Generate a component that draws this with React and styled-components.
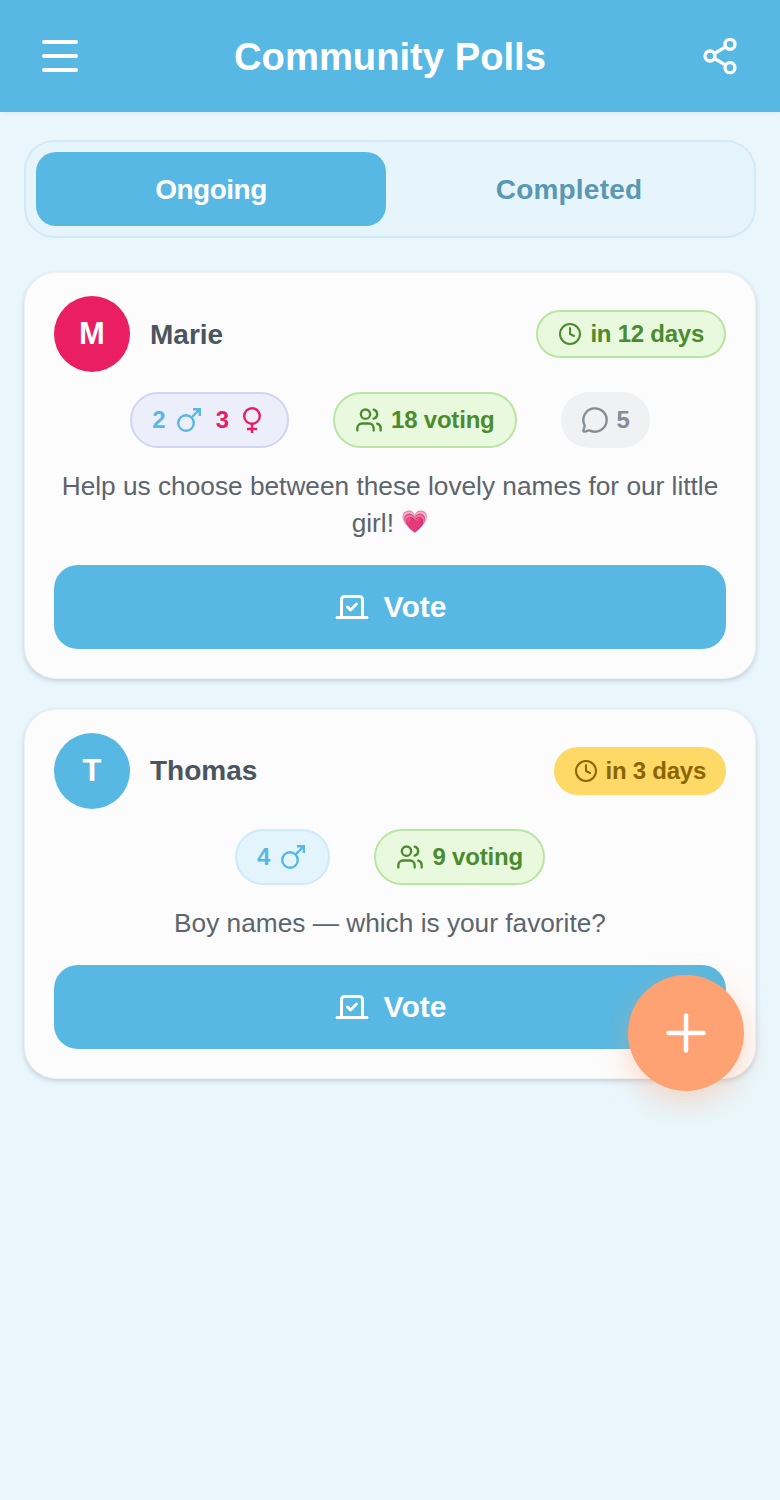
import styled, { createGlobalStyle } from "styled-components";
import { Clock, MessageCircle, Menu, Plus, Share2, Users, Vote } from "lucide-react";

const GlobalStyle = createGlobalStyle`
  html, body {
    margin: 0;
    padding: 0;
    background: #e9f6fc;
  }
  * {
    box-sizing: border-box;
  }
`;

const Page = styled.div`
  position: relative;
  width: 780px;
  height: 1500px;
  overflow: hidden;
  background: #e9f6fc;
  font-family: "Liberation Sans", Arial, sans-serif;
`;

const Header = styled.header`
  height: 112px;
  padding: 0 40px;
  display: grid;
  grid-template-columns: 1fr auto 1fr;
  align-items: center;
  background: #56b8e3;
  color: #fff;
  box-shadow: 0 2px 6px rgba(0, 0, 0, 0.05);
`;

const IconButton = styled.div`
  display: flex;
  justify-content: ${(p) => (p.$end ? "flex-end" : "flex-start")};
  margin-left: ${(p) => (p.$end ? 0 : -4)}px;
`;

const Title = styled.h1`
  margin: 2px 0 0;
  font-size: 38.2px;
  font-weight: 700;
`;

const Content = styled.main`
  padding: 28px 24px;
`;

const Tabs = styled.div`
  display: flex;
  gap: 8px;
  padding: 10px;
  margin-bottom: 34px;
  border: 2px solid #d2eaf7;
  border-radius: 30px;
  background: #e6f4fb;
`;

const Tab = styled.div`
  flex: 1;
  height: 74px;
  padding-top: 1px;
  display: flex;
  align-items: center;
  justify-content: center;
  border-radius: 20px;
  font-size: 28px;
  font-weight: 700;
  letter-spacing: ${(p) => (p.$active ? "-0.5px" : "0.2px")};
  background: ${(p) => (p.$active ? "#56b8e3" : "transparent")};
  color: ${(p) => (p.$active ? "#fff" : "#5a97b2")};
`;

const Card = styled.article`
  padding: 23px 29px 29px;
  margin-bottom: 30px;
  background: #fcfcfc;
  border: 1px solid #eef1f3;
  border-radius: 32px;
  box-shadow: 0 2px 5px rgba(40, 60, 70, 0.2);
`;

const CardTop = styled.div`
  display: flex;
  align-items: center;
  justify-content: space-between;
`;

const Author = styled.div`
  display: flex;
  align-items: center;
  gap: 20px;
`;

const Avatar = styled.div`
  width: 76px;
  height: 76px;
  display: flex;
  align-items: center;
  justify-content: center;
  border-radius: 50%;
  background: ${(p) => p.$color};
  color: #fff;
  font-size: 31px;
  font-weight: 700;
`;

const Name = styled.span`
  padding-top: 1px;
  font-size: 28px;
  font-weight: 700;
  color: #4a5560;
`;

const Deadline = styled.div`
  height: 48px;
  padding: 0 20px;
  display: flex;
  align-items: center;
  gap: 8px;
  border-radius: 24px;
  border: ${(p) => (p.$border ? `2px solid ${p.$border}` : "none")};
  background: ${(p) => p.$bg};
  color: ${(p) => p.$color};
  font-size: 24px;
  font-weight: 700;
  letter-spacing: -0.25px;
`;

const Stats = styled.div`
  margin-top: 20px;
  display: flex;
  justify-content: center;
  gap: 44px;
`;

const Pill = styled.div`
  height: 56px;
  padding: 0 20px;
  display: flex;
  align-items: center;
  gap: 8px;
  border-radius: 28px;
  border: ${(p) => (p.$border ? `2px solid ${p.$border}` : "none")};
  background: ${(p) => p.$bg};
  color: ${(p) => p.$color};
  font-size: 24px;
  font-weight: 700;
  letter-spacing: -0.2px;
`;

const GenderPill = styled(Pill)`
  gap: 15px;
  padding-right: 23px;
  letter-spacing: 0;
`;

const Count = styled.span`
  display: flex;
  align-items: center;
  gap: 11px;
  color: ${(p) => p.$color};
`;

const Description = styled.p`
  margin: 20px 0 23.5px;
  font-size: 26.25px;
  line-height: 36.5px;
  text-align: center;
  color: #5c646e;
`;

const Emoji = styled.span`
  font-size: 22px;
  line-height: 1;
  vertical-align: 3px;
`;

const VoteButton = styled.div`
  height: 84px;
  display: flex;
  align-items: center;
  justify-content: center;
  gap: 14px;
  border-radius: 24px;
  background: #56b8e3;
  color: #fff;
  font-size: 30px;
  font-weight: 700;
`;

const Fab = styled.div`
  position: absolute;
  left: 628px;
  top: 975px;
  width: 116px;
  height: 116px;
  display: flex;
  align-items: center;
  justify-content: center;
  border-radius: 50%;
  background: #ffa273;
  color: #fff;
  box-shadow: 0 10px 30px rgba(255, 162, 115, 0.4);
`;

const BLUE = "#56b8e3";
const PINK = "#e91e63";
const GREEN = { $bg: "#e9f9dd", $border: "#b9e5a2", $color: "#4b8b2f" };
const YELLOW = { $bg: "#ffd966", $color: "#8a6500" };

function MaleIcon() {
  return (
    <svg width="24" height="24" viewBox="0 0 24 24" fill="none" stroke="currentColor" strokeWidth="2.4">
      <circle cx="9" cy="15" r="7.8" />
      <path d="M15 9l8-8M16 1.2h6.8v6.8" />
    </svg>
  );
}

function FemaleIcon() {
  return (
    <svg width="24" height="26" viewBox="0 0 24 26" fill="none" stroke="currentColor" strokeWidth="2.4">
      <circle cx="12" cy="9" r="7.8" />
      <path d="M12 17v9M7 22h10" />
    </svg>
  );
}

function PollCard({ initial, color, name, deadline, tone, counts, voting, comments, text, emoji }) {
  return (
    <Card>
      <CardTop>
        <Author>
          <Avatar $color={color}>{initial}</Avatar>
          <Name>{name}</Name>
        </Author>
        <Deadline {...tone}>
          <Clock size={24} strokeWidth={2} />
          {deadline}
        </Deadline>
      </CardTop>
      <Stats>
        <GenderPill
          $bg={counts.female ? "#eceffa" : "#e3f4fd"}
          $border={counts.female ? "#d2d5ef" : "#cfeafa"}
          $color={BLUE}
        >
          <Count $color={BLUE}>
            {counts.male}
            <MaleIcon />
          </Count>
          {counts.female && (
            <Count $color={PINK}>
              {counts.female}
              <FemaleIcon />
            </Count>
          )}
        </GenderPill>
        <Pill {...GREEN}>
          <Users size={28} strokeWidth={2} />
          {voting} voting
        </Pill>
        {comments && (
          <Pill $bg="#eff1f3" $color="#868c96">
            <MessageCircle size={28} strokeWidth={2} />
            {comments}
          </Pill>
        )}
      </Stats>
      <Description>
        {text} {emoji && <Emoji>{emoji}</Emoji>}
      </Description>
      <VoteButton>
        <Vote size={36} strokeWidth={2} />
        Vote
      </VoteButton>
    </Card>
  );
}

export default function App() {
  return (
    <Page>
      <GlobalStyle />
      <Header>
        <IconButton>
          <Menu size={48} strokeWidth={2} />
        </IconButton>
        <Title>Community Polls</Title>
        <IconButton $end>
          <Share2 size={40} strokeWidth={2} />
        </IconButton>
      </Header>
      <Content>
        <Tabs>
          <Tab $active>Ongoing</Tab>
          <Tab>Completed</Tab>
        </Tabs>
        <PollCard
          initial="M"
          color={PINK}
          name="Marie"
          deadline="in 12 days"
          tone={GREEN}
          counts={{ male: 2, female: 3 }}
          voting={18}
          comments={5}
          text="Help us choose between these lovely names for our little girl!"
          emoji="💗"
        />
        <PollCard
          initial="T"
          color={BLUE}
          name="Thomas"
          deadline="in 3 days"
          tone={YELLOW}
          counts={{ male: 4 }}
          voting={9}
          text="Boy names — which is your favorite?"
        />
      </Content>
      <Fab>
        <Plus size={60} strokeWidth={1.8} />
      </Fab>
    </Page>
  );
}
